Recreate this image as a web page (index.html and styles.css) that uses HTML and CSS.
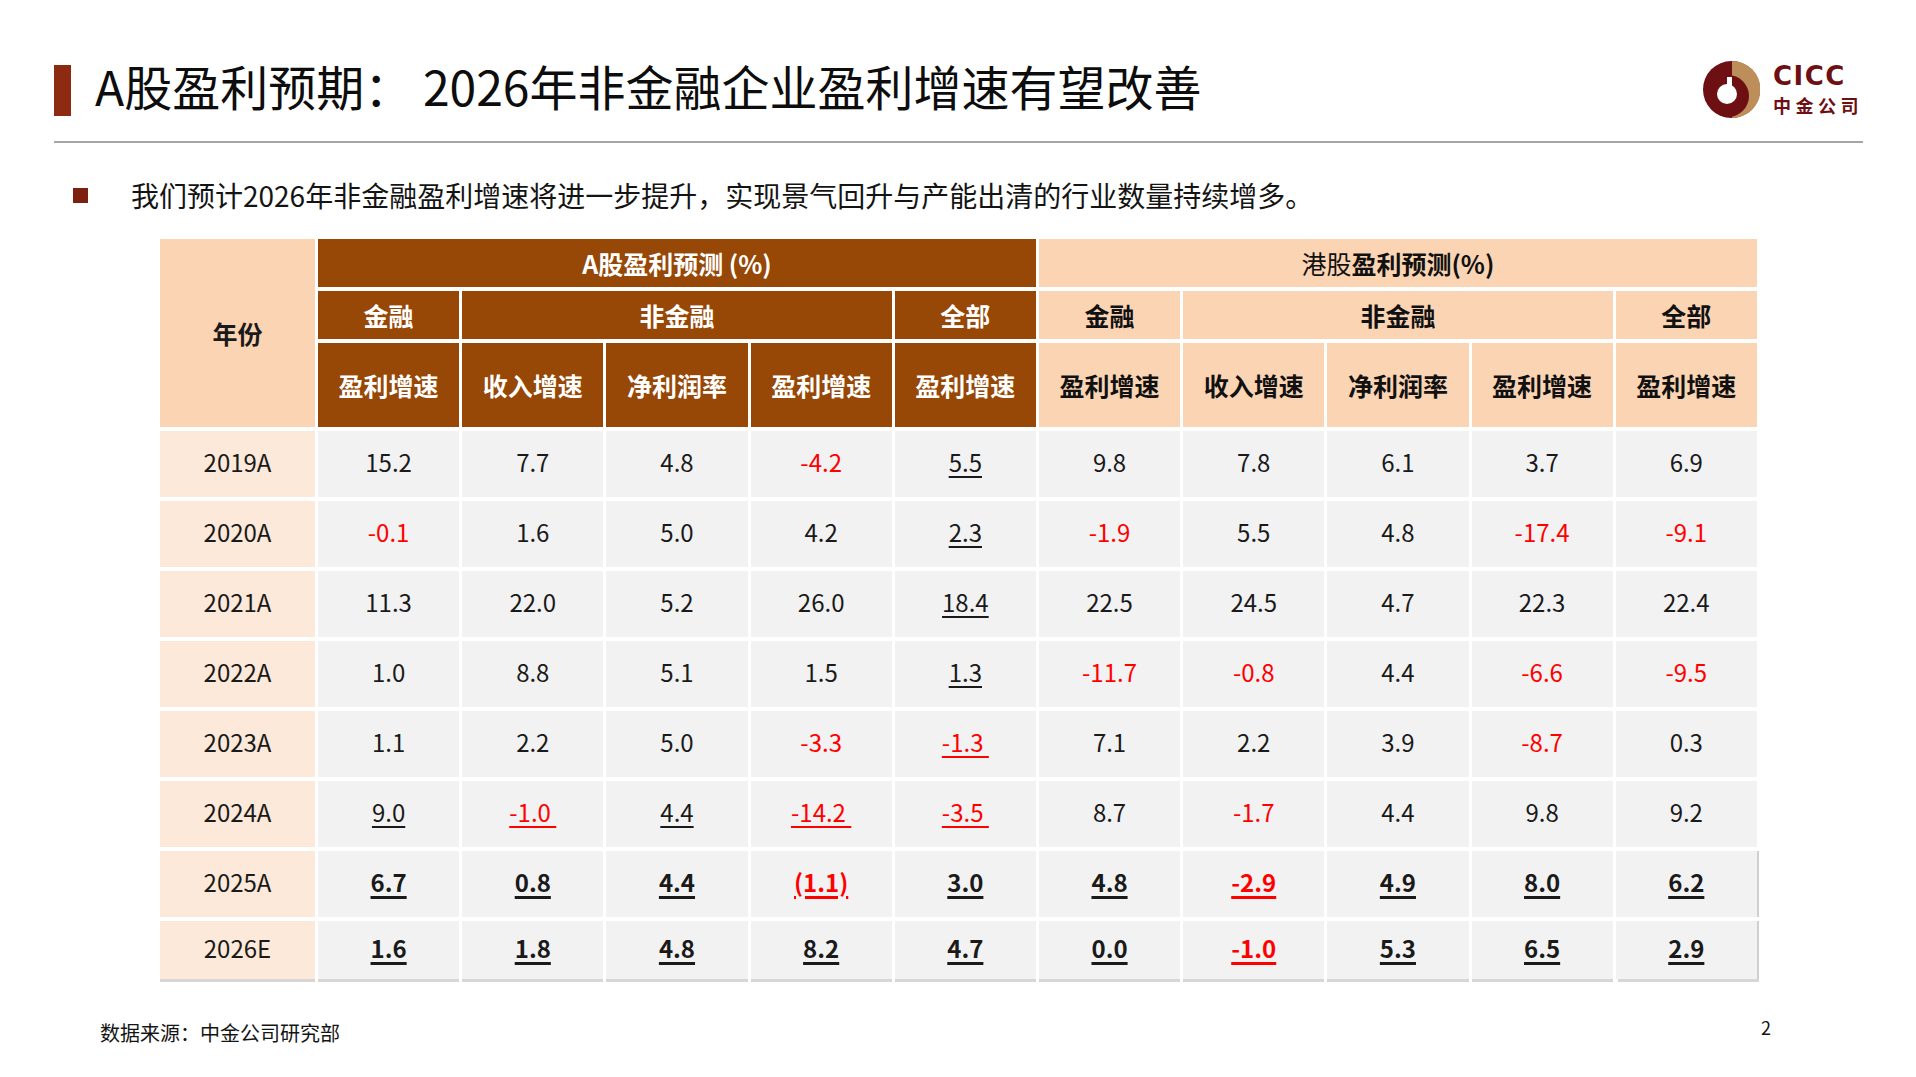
FILE: index.html
```html
<!DOCTYPE html>
<html lang="zh-CN">
<head>
<meta charset="utf-8">
<title>A股盈利预期</title>
<link rel="stylesheet" href="styles.css">
</head>
<body>
<div class="slide">
  <header class="top">
    <div class="title-wrap">
      <span class="bar"></span>
      <h1 class="title">A股盈利预期： 2026年非金融企业盈利增速有望改善</h1>
    </div>
    <div class="logo">
      <svg class="logo-mark" width="57" height="57" viewBox="0 0 57 57">
        <circle cx="28.5" cy="28.5" r="28.5" fill="#6e1013"/>
        <path d="M29 0 A28.5 28.5 0 0 1 29 57 Z" fill="#bd8d5a"/>
        <circle cx="25" cy="35" r="21" fill="#6e1013"/>
        <circle cx="24" cy="33" r="10" fill="#fff"/>
        <rect x="24" y="16" width="5" height="17" fill="#fff"/>
      </svg>
      <div class="logo-text">
        <span class="cicc">CICC</span>
        <span class="cn">中金公司</span>
      </div>
    </div>
  </header>

  <p class="lead"><span class="sq"></span>我们预计2026年非金融盈利增速将进一步提升，实现景气回升与产能出清的行业数量持续增多。</p>

  <div class="grid">
    <div class="h-year">年份</div>
    <div class="h-a span5">A股盈利预测 (%)</div>
    <div class="h-h span5"><span class="thin">港股</span>盈利预测(%)</div>

    <div class="h-a">金融</div>
    <div class="h-a span3">非金融</div>
    <div class="h-a">全部</div>
    <div class="h-h">金融</div>
    <div class="h-h span3">非金融</div>
    <div class="h-h">全部</div>

    <div class="h-a">盈利增速</div>
    <div class="h-a">收入增速</div>
    <div class="h-a">净利润率</div>
    <div class="h-a">盈利增速</div>
    <div class="h-a">盈利增速</div>
    <div class="h-h">盈利增速</div>
    <div class="h-h">收入增速</div>
    <div class="h-h">净利润率</div>
    <div class="h-h">盈利增速</div>
    <div class="h-h">盈利增速</div>

    <div class="yr">2019A</div>
    <div class="c">15.2</div><div class="c">7.7</div><div class="c">4.8</div><div class="c"><span class="r">-4.2</span></div><div class="c"><span class="u">5.5</span></div>
    <div class="c">9.8</div><div class="c">7.8</div><div class="c">6.1</div><div class="c">3.7</div><div class="c">6.9</div>

    <div class="yr">2020A</div>
    <div class="c"><span class="r">-0.1</span></div><div class="c">1.6</div><div class="c">5.0</div><div class="c">4.2</div><div class="c"><span class="u">2.3</span></div>
    <div class="c"><span class="r">-1.9</span></div><div class="c">5.5</div><div class="c">4.8</div><div class="c"><span class="r">-17.4</span></div><div class="c"><span class="r">-9.1</span></div>

    <div class="yr">2021A</div>
    <div class="c">11.3</div><div class="c">22.0</div><div class="c">5.2</div><div class="c">26.0</div><div class="c"><span class="u">18.4</span></div>
    <div class="c">22.5</div><div class="c">24.5</div><div class="c">4.7</div><div class="c">22.3</div><div class="c">22.4</div>

    <div class="yr">2022A</div>
    <div class="c">1.0</div><div class="c">8.8</div><div class="c">5.1</div><div class="c">1.5</div><div class="c"><span class="u">1.3</span></div>
    <div class="c"><span class="r">-11.7</span></div><div class="c"><span class="r">-0.8</span></div><div class="c">4.4</div><div class="c"><span class="r">-6.6</span></div><div class="c"><span class="r">-9.5</span></div>

    <div class="yr">2023A</div>
    <div class="c">1.1</div><div class="c">2.2</div><div class="c">5.0</div><div class="c"><span class="r">-3.3</span></div><div class="c"><span class="u r">-1.3&nbsp;</span></div>
    <div class="c">7.1</div><div class="c">2.2</div><div class="c">3.9</div><div class="c"><span class="r">-8.7</span></div><div class="c">0.3</div>

    <div class="yr">2024A</div>
    <div class="c"><span class="u">9.0</span></div><div class="c"><span class="u r">-1.0&nbsp;</span></div><div class="c"><span class="u">4.4</span></div><div class="c"><span class="u r">-14.2&nbsp;</span></div><div class="c"><span class="u r">-3.5&nbsp;</span></div>
    <div class="c">8.7</div><div class="c"><span class="r">-1.7</span></div><div class="c">4.4</div><div class="c">9.8</div><div class="c">9.2</div>

    <div class="yr">2025A</div>
    <div class="c bold"><span class="u">6.7</span></div><div class="c bold"><span class="u">0.8</span></div><div class="c bold"><span class="u">4.4</span></div><div class="c bold"><span class="u r">(1.1)</span></div><div class="c bold"><span class="u">3.0</span></div>
    <div class="c bold"><span class="u">4.8</span></div><div class="c bold"><span class="u r">-2.9</span></div><div class="c bold"><span class="u">4.9</span></div><div class="c bold"><span class="u">8.0</span></div><div class="c bold edge"><span class="u">6.2</span></div>

    <div class="yr last">2026E</div>
    <div class="c bold last"><span class="u">1.6</span></div><div class="c bold last"><span class="u">1.8</span></div><div class="c bold last"><span class="u">4.8</span></div><div class="c bold last"><span class="u">8.2</span></div><div class="c bold last"><span class="u">4.7</span></div>
    <div class="c bold last"><span class="u">0.0</span></div><div class="c bold last"><span class="u r">-1.0</span></div><div class="c bold last"><span class="u">5.3</span></div><div class="c bold last"><span class="u">6.5</span></div><div class="c bold last edge"><span class="u">2.9</span></div>
  </div>

  <footer class="foot">
    <span class="source">数据来源：中金公司研究部</span>
    <span class="page">2</span>
  </footer>
</div>
</body>
</html>
```
FILE: styles.css
```css
* { box-sizing: border-box; }
html, body { margin: 0; padding: 0; background: #fff; }
body {
  font-family: "Noto Sans CJK SC", "Noto Sans", sans-serif;
  color: #111;
}
.slide { width: 1916px; height: 1077px; overflow: hidden; }

.top {
  height: 143px;
  margin: 0 53px 0 54px;
  padding-top: 60px;
  display: flex;
  align-items: flex-start;
  justify-content: space-between;
  border-bottom: 2px solid #a6a6a6;
}
.title-wrap { display: flex; align-items: center; }
.bar { width: 17px; height: 51px; background: #8c2a12; margin-right: 24px; }
.title {
  margin: 0;
  padding-bottom: 9px;
  font-size: 48px;
  line-height: 51px;
  font-weight: 400;
  color: #0d0d0d;
  white-space: nowrap;
}
.logo { display: flex; align-items: flex-start; margin-top: 1px; }
.logo-mark { display: block; }
.logo-text { display: flex; flex-direction: column; margin-left: 13px; color: #6e1013; }
.cicc {
  font-family: "DejaVu Sans", sans-serif;
  font-weight: 700;
  font-size: 26px;
  line-height: 30px;
  letter-spacing: 1.5px;
}
.cn {
  font-weight: 700;
  font-size: 18px;
  line-height: 26px;
  letter-spacing: 4.5px;
  margin-top: 1px;
}

.lead {
  margin: 37px 0 0 73px;
  height: 30px;
  display: flex;
  align-items: center;
  font-size: 28px;
  line-height: 30px;
  color: #141414;
  white-space: nowrap;
}
.sq { width: 15px; height: 15px; background: #7d200f; margin-right: 43px; flex: none; }

.grid {
  margin: 29px 0 0 160px;
  display: grid;
  grid-template-columns: 155px repeat(10, 141.2px);
  grid-template-rows: 48px 48px 84px repeat(7, 66px) 58px;
  column-gap: 3px;
  row-gap: 4px;
}
.grid > div {
  display: flex;
  align-items: center;
  justify-content: center;
  white-space: nowrap;
}
.span5 { grid-column: span 5; }
.span3 { grid-column: span 3; }
.h-year {
  grid-row: span 3;
  background: #fbd4b4;
  font-size: 25px;
  font-weight: 700;
  color: #1a1a1a;
}
.h-a { background: #974706; color: #fff; font-size: 25px; font-weight: 700; }
.h-h { background: #fbd4b4; color: #111; font-size: 25px; font-weight: 700; }
.thin { font-weight: 400; }
.yr { background: #fde9d9; font-size: 24px; color: #1a1a1a; padding-bottom: 6px; }
.c { background: #f2f2f2; font-size: 24px; color: #1a1a1a; padding-bottom: 6px; }
.bold { font-weight: 700; }
.r { color: #f00; }
.u {
  text-decoration: underline;
  text-decoration-thickness: 2px;
  text-underline-offset: 4px;
}
.bold .u { text-decoration-thickness: 3px; }
.edge { box-shadow: 2px 0 0 #d0d0d0; }
.last { box-shadow: 0 3px 0 #d6d6d6; }
.last.edge { box-shadow: 2px 0 0 #d0d0d0, 2px 3px 0 #d6d6d6; }

.foot {
  width: 1771px;
  margin-top: 33px;
  padding-left: 100px;
  display: flex;
  justify-content: space-between;
  align-items: flex-start;
}
.source { font-size: 20px; line-height: 24px; padding-top: 9px; color: #141414; }
.page { font-size: 18px; line-height: 24px; padding-top: 3px; color: #141414; }
```
